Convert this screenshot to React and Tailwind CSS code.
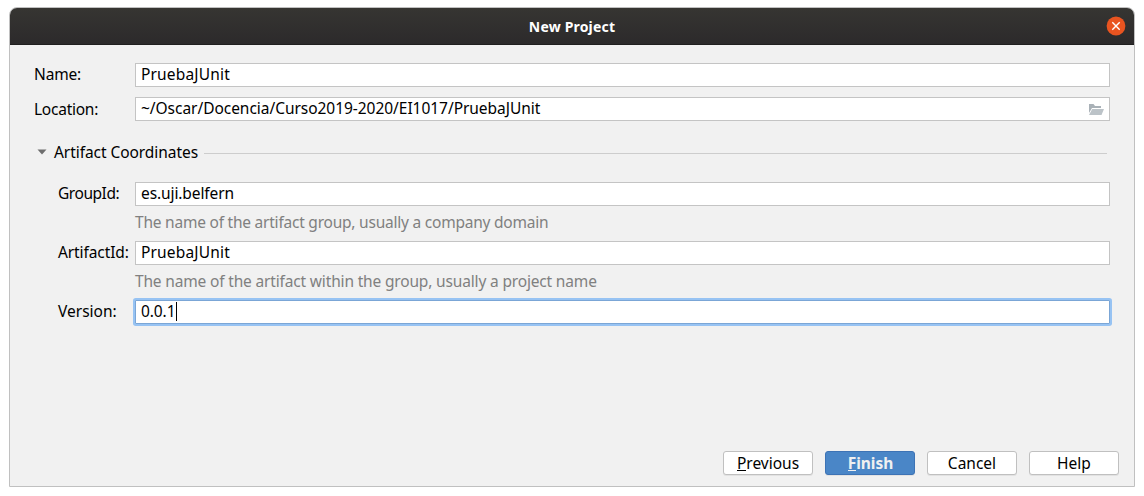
import React from "react";

function Field({ label, labelClass, value, valueClass, labelOffset = "", focused, children }) {
  return (
    <div className="flex h-6 items-start">
      <label className={`block shrink-0 whitespace-nowrap leading-5 ${labelOffset} ${labelClass}`}>{label}</label>
      <div
        className={`flex h-6 min-w-0 flex-1 border bg-white pl-[5px] ${
          focused ? "rounded-[1px] border-[#7ba6d6] ring-2 ring-[#97c3f3]" : "border-[#c4c4c4]"
        }`}
      >
        <span className={`whitespace-nowrap leading-5 ${valueClass}`}>{value}</span>
        {children}
      </div>
    </div>
  );
}

function Hint({ className, children }) {
  return <p className={`ml-[125px] h-5 whitespace-nowrap leading-5 text-[#808080] ${className}`}>{children}</p>;
}

function Button({ primary, className = "", children }) {
  return (
    <button
      type="button"
      className={`flex h-6 w-[90px] justify-center whitespace-nowrap rounded-[3px] border pt-px leading-5 shadow-[0_1px_0_#e2e2e2] ${
        primary ? "border-[#3d73b5] bg-[#4a86c7] pl-px font-bold text-[#f0f0f0]" : "border-[#c0c0c0] bg-white"
      } ${className}`}
    >
      <span>{children}</span>
    </button>
  );
}

function Mnemonic({ children }) {
  return <span className="inline-block h-[18px] border-b border-current">{children}</span>;
}

export default function App() {
  return (
    <div className="h-[496px] w-[1144px] bg-white pl-[9px] pt-[7px] font-['Noto_Sans','Open_Sans',sans-serif] text-[15.5px] text-black">
      <div className="flex h-[480px] w-[1126px] flex-col overflow-hidden rounded-t-[8px] border border-[#c0c0c0] bg-[#f1f1f1]">
        <header className="grid h-[37px] shrink-0 grid-cols-[1fr_auto_1fr] items-center border-b border-[#201f1f] bg-linear-to-b from-[#363532] to-[#2c2a2b]">
          <span />
          <h1 className="whitespace-nowrap pt-[2px] text-[14px] font-bold leading-5 tracking-[0.18px] text-white">New Project</h1>
          <svg className="mr-[8px] justify-self-end" width="20" height="20" viewBox="0 0 20 20">
            <circle cx="10" cy="10" r="9.4" fill="#e95420" />
            <path d="M6.3 6.3l7.4 7.4M13.7 6.3l-7.4 7.4" stroke="#fff" strokeWidth="1.4" />
          </svg>
        </header>

        <main className="flex flex-1 flex-col pr-6 pt-[18px]">
          <Field label="Name:" labelClass="w-[125px] pl-6 tracking-[-0.15px]" labelOffset="pt-px" value="PruebaJUnit" valueClass="tracking-[0.17px]" />
          <div className="h-[10px]" />
          <Field
            label="Location:"
            labelClass="w-[125px] pl-6 tracking-[-0.25px]"
            labelOffset="pt-[2px]"
            value="~/Oscar/Docencia/Curso2019-2020/EI1017/PruebaJUnit"
            valueClass="tracking-[-0.04px]"
          >
            <svg className="ml-auto mr-[5px] mt-[5px]" width="16" height="13" viewBox="0 0 16 13">
              <path d="M1 1h4.5l1.5 2h6v2H4L1 10z" fill="#a9b1b7" />
              <path d="M4.2 6H16l-2.5 6H1z" fill="#bcc3c8" />
            </svg>
          </Field>

          <div className="mt-[21px] flex h-5 items-center pl-[27px]">
            <svg width="10" height="6" viewBox="0 0 10 6">
              <path d="M.5.5h9L5 5.4z" fill="#6e6e6e" />
            </svg>
            <h2 className="ml-[7px] w-[150px] whitespace-nowrap leading-5 tracking-[-0.06px]">Artifact Coordinates</h2>
            <div className="mr-[3px] mt-[3px] h-px flex-1 bg-[#cdcdcd]" />
          </div>

          <div className="mt-5">
            <Field label="GroupId:" labelClass="w-[125px] pl-12 tracking-[-0.45px]" labelOffset="pt-px" value="es.uji.belfern" valueClass="tracking-[-0.1px]" />
            <div className="pb-[9px] pt-[6px]">
              <Hint className="tracking-[-0.225px]">The name of the artifact group, usually a company domain</Hint>
            </div>
            <Field label="ArtifactId:" labelClass="w-[125px] pl-12 tracking-[-0.1px]" labelOffset="pt-px" value="PruebaJUnit" valueClass="tracking-[0.17px]" />
            <div className="pb-[9px] pt-[6px]">
              <Hint className="tracking-[-0.165px]">The name of the artifact within the group, usually a project name</Hint>
            </div>
            <Field label="Version:" labelClass="w-[125px] pl-12" labelOffset="pt-px" value="0.0.1" valueClass="w-[35px] tracking-[-0.1px]" focused>
              <span className="mt-px h-[19px] w-px bg-black" />
            </Field>
          </div>
        </main>

        <footer className="mb-[11px] mr-[15px] flex justify-end gap-3">
          <Button><Mnemonic>P</Mnemonic>revious</Button>
          <Button primary><Mnemonic>F</Mnemonic>inish</Button>
          <Button>Cancel</Button>
          <Button>Help</Button>
        </footer>
      </div>
    </div>
  );
}
